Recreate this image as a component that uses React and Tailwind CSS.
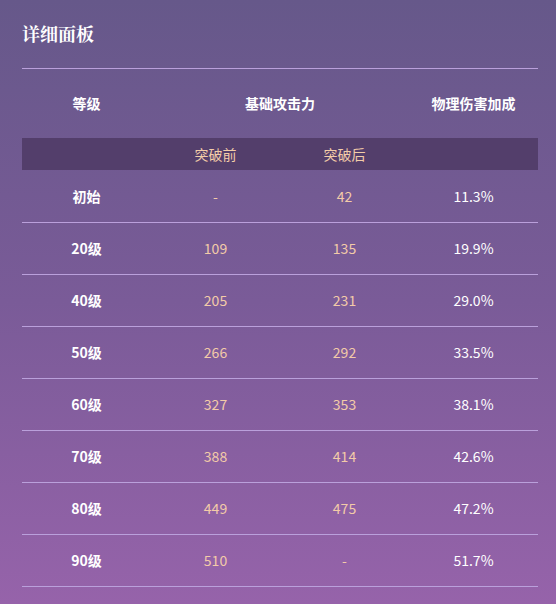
import React from 'react';

const rows = [
  { level: "初始", before: "-", after: "42", bonus: "11.3%" },
  { level: "20级", before: "109", after: "135", bonus: "19.9%" },
  { level: "40级", before: "205", after: "231", bonus: "29.0%" },
  { level: "50级", before: "266", after: "292", bonus: "33.5%" },
  { level: "60级", before: "327", after: "353", bonus: "38.1%" },
  { level: "70级", before: "388", after: "414", bonus: "42.6%" },
  { level: "80级", before: "449", after: "475", bonus: "47.2%" },
  { level: "90级", before: "510", after: "-", bonus: "51.7%" }
];

const font = { fontFamily: '"Noto Sans CJK SC", "Noto Sans", sans-serif' };

export default function App() {
  return (
    <div
      className="w-[556px] h-[604px] bg-linear-to-b from-[#66588a] via-[#7a5b98] to-[#9663aa] pl-[22px] pr-[18px] pt-[20px] text-white"
      style={font}
    >
      <h1 className="text-[18px] leading-[26px] font-bold font-['Noto_Serif_CJK_SC','Noto_Sans_CJK_SC',serif]">详细面板</h1>

      <div className="mt-[22px] border-t border-[#baa0db]">
        {/* header */}
        <div className="grid grid-cols-4 h-[69px] items-center text-[14px] font-bold">
          <div className="text-center">等级</div>
          <div className="col-span-2 text-center">基础攻击力</div>
          <div className="text-center">物理伤害加成</div>
        </div>
        <div className="grid grid-cols-4 h-[32px] items-center bg-[#533e6b] text-[14px] text-[#f3cda9]">
          <div></div>
          <div className="text-center">突破前</div>
          <div className="text-center">突破后</div>
          <div></div>
        </div>

        {rows.map((r, i) => (
          <div
            key={i}
            className={`grid grid-cols-4 h-[52px] items-center text-[14px] ${i > 0 ? "border-t border-[#baa0db]" : ""}`}
          >
            <div className="text-center font-bold">{r.level}</div>
            <div className="text-center text-[#f3cba8]">{r.before}</div>
            <div className="text-center text-[#f3cba8]">{r.after}</div>
            <div className="text-center">{r.bonus}</div>
          </div>
        ))}
        <div className="border-t border-[#baa0db]"></div>
      </div>
    </div>
  );
}
